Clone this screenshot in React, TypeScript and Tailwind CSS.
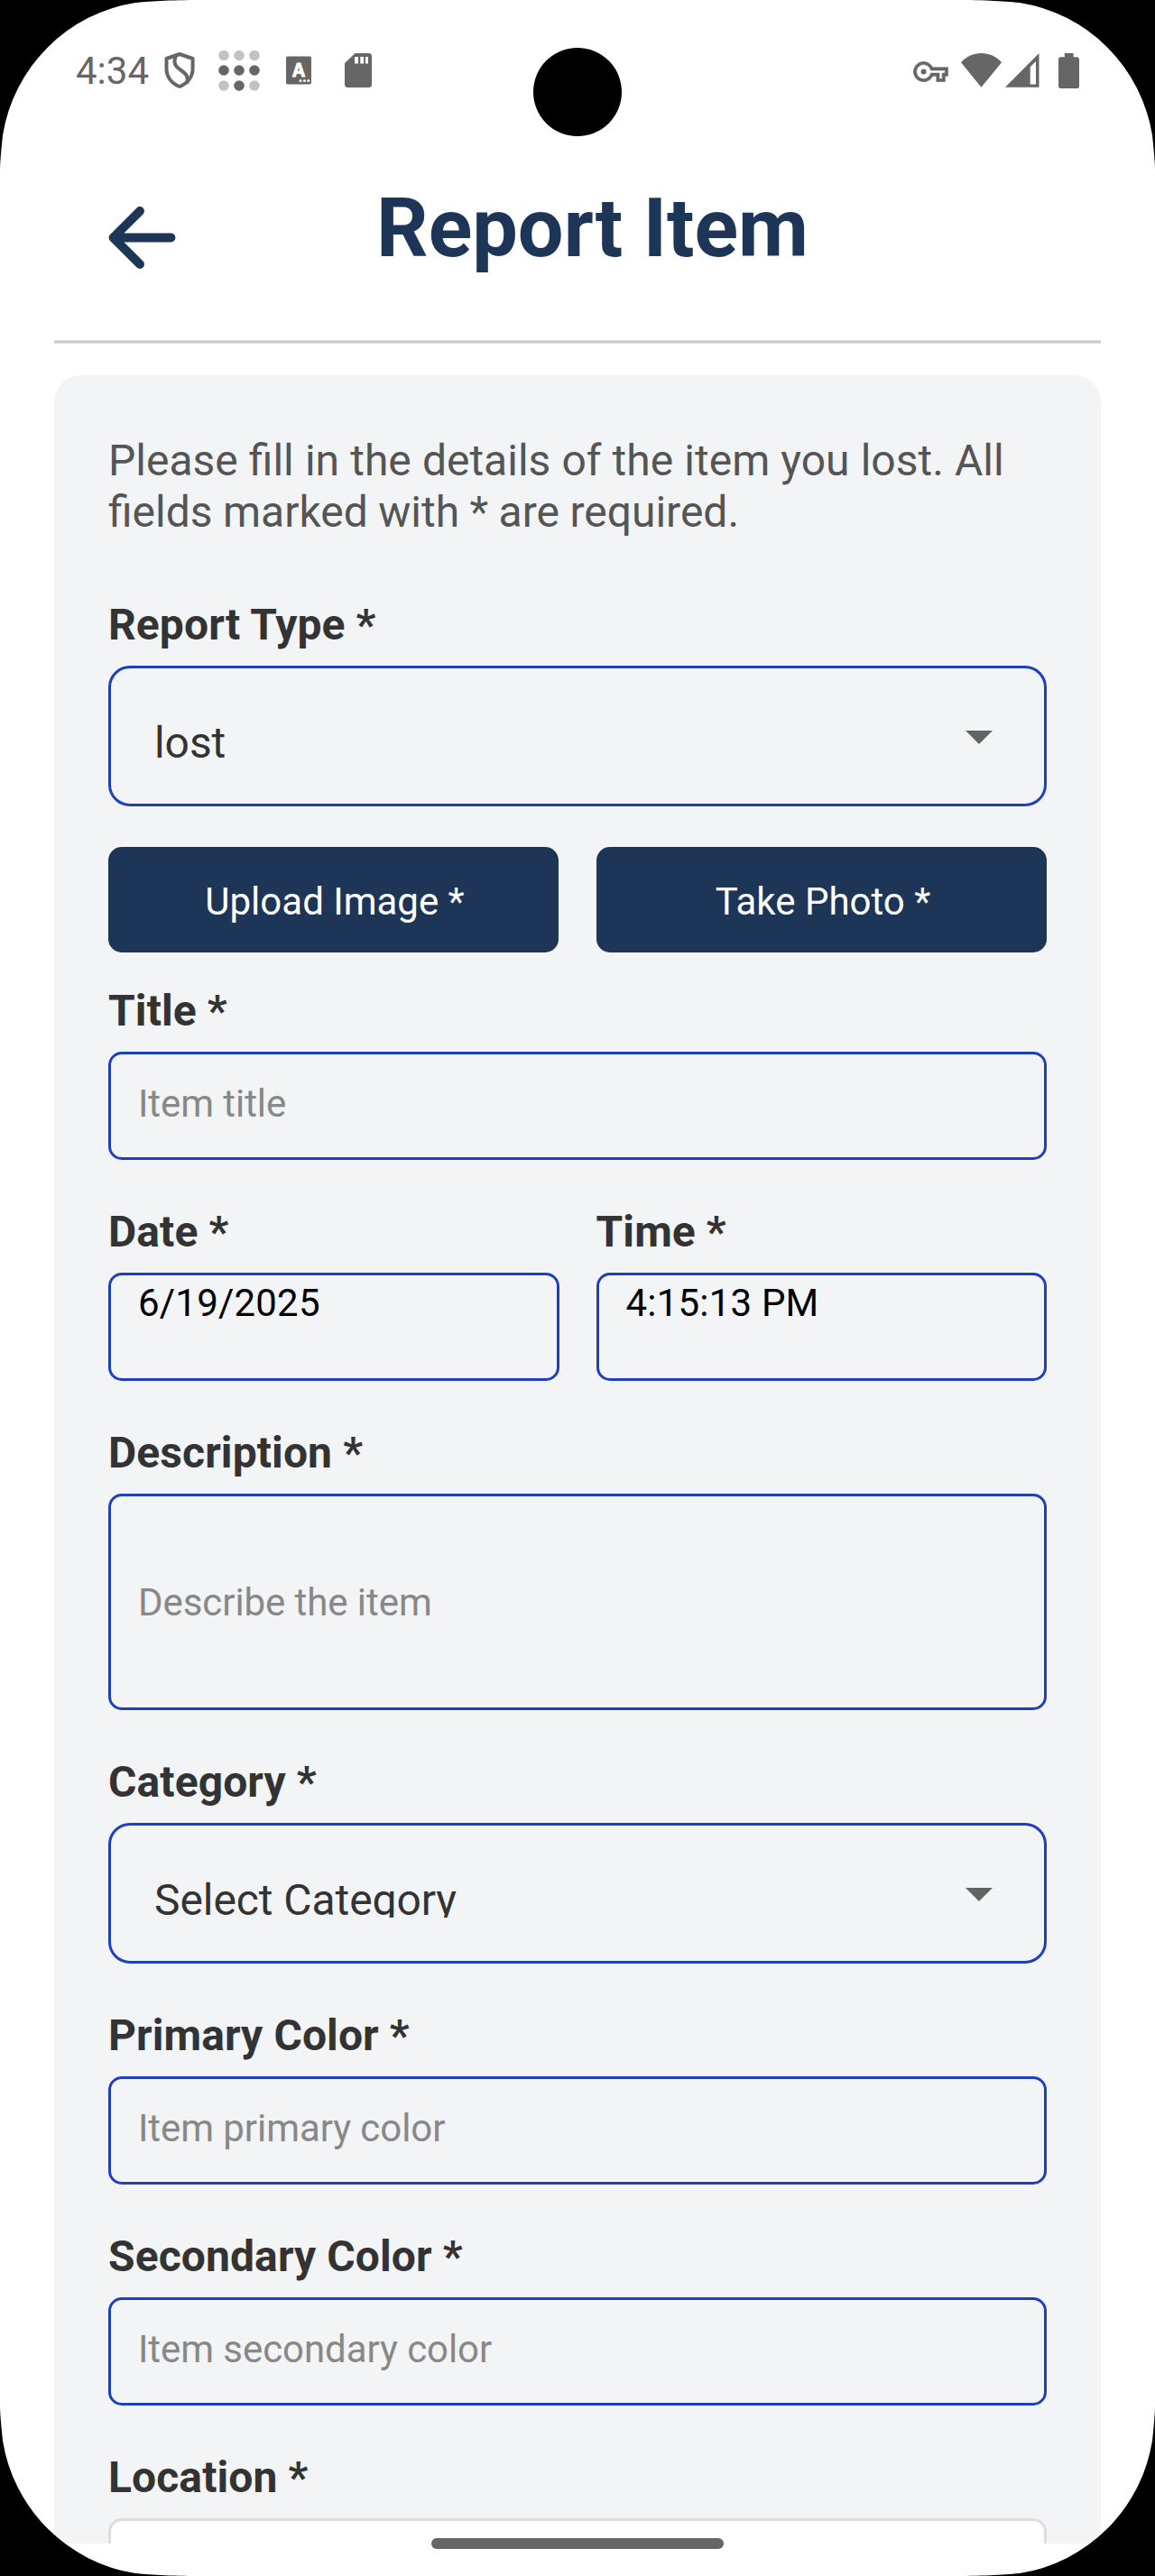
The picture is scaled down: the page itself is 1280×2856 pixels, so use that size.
import type { ReactNode } from 'react';

const INK = '#666666';

function ShieldIcon() {
  return (
    <svg className="ml-[17px] h-[42px] w-[34px]" viewBox="182 57 34 42" fill="none" stroke={INK} strokeLinejoin="round" strokeLinecap="round">
      <path d="M199 60 L213.6 65 V76 C213.6 85.500 207.500 92.500 199 96 C190.500 92.500 184.500 85.500 184.500 76 V65 Z" strokeWidth="4" />
      <path d="M195 62 C191.500 70 194.500 73.500 200 77.500 C206 81.500 209 84.500 207.500 91" strokeWidth="4" />
    </svg>
  );
}

function DotsIcon() {
  const rows = [61.5, 78, 95];
  const cols = [248, 265, 282];
  return (
    <svg className="ml-[26px] h-[46px] w-[46px]" viewBox="242 55 46 46">
      {rows.map((cy, r) =>
        cols.map((cx, c) => (
          <circle key={`${r}-${c}`} cx={cx} cy={cy} r="5.8" fill={r === 1 || (r === 2 && c === 1) ? INK : '#c2c2c2'} />
        )),
      )}
    </svg>
  );
}

function KeyboardIcon() {
  return (
    <svg className="ml-[29px] h-[32px] w-[28px]" viewBox="317 62 28 32">
      <rect x="317" y="62.500" width="28" height="31" rx="2" fill={INK} />
      <text x="331" y="85" textAnchor="middle" fontFamily="Inter, sans-serif" fontWeight="700" fontSize="19.500" fill="#fff" stroke="#fff" strokeWidth="0.800" strokeLinejoin="round">
        A
      </text>
      <circle cx="333" cy="89.600" r="1.500" fill="#fff" />
      <circle cx="337.400" cy="89.600" r="1.500" fill="#fff" />
      <circle cx="341.800" cy="89.600" r="1.500" fill="#fff" />
    </svg>
  );
}

function SdCardIcon() {
  return (
    <svg className="ml-[37px] h-[38px] w-[30px]" viewBox="382 59 30 38">
      <path d="M393.500 59 H408.500 Q412 59 412 62.500 V93.500 Q412 97 408.500 97 H385.500 Q382 97 382 93.500 V70 Z" fill={INK} />
      <path d="M393 63 h4 v7.500 h-4z M399.300 63 h3.800 v7.500 h-3.800z M405 63 h3 v7.500 h-3z" fill="#fff" />
    </svg>
  );
}

function KeyIcon() {
  return (
    <svg className="mt-[2px] h-[23px] w-[39px]" viewBox="-0.300 4.800 24.600 14.400" fill={INK}>
      <path
        fillRule="evenodd"
        stroke={INK}
        strokeWidth="0.400"
        d="M22 19h-6v-4h-2.680c-1.140 2.420-3.600 4-6.320 4-3.860 0-7-3.140-7-7s3.140-7 7-7c2.720 0 5.170 1.580 6.320 4H24v6h-2v4zm-4-2h2v-4h2v-2H11.940l-.23-.67C11.010 8.340 9.110 7 7 7c-2.760 0-5 2.240-5 5s2.240 5 5 5c2.110 0 4.010-1.340 4.710-3.330l.23-.67H18v4z"
      />
      <circle cx="7" cy="12" r="1.900" />
    </svg>
  );
}

function WifiIcon() {
  return (
    <svg className="ml-[14px] h-[38px] w-[45px]" viewBox="1065 58.500 45 38">
      <path d="M1087.500 96.300 L1065 68.700 C1071 62 1079 58.500 1087.500 58.500 C1096 58.500 1104 62 1110 68.700 Z" fill={INK} />
    </svg>
  );
}

function SignalIcon() {
  return (
    <svg className="ml-[4px] h-[38px] w-[38px]" viewBox="1114 58.500 38 38">
      <path fillRule="evenodd" d="M1114 96.300 H1151.500 V58.500 Z M1141.700 93 V73.700 L1148 67.500 V93 Z" fill={INK} />
    </svg>
  );
}

function BatteryIcon() {
  return (
    <svg className="ml-[21px] h-[39px] w-[23px]" viewBox="1173 58 23 39">
      <rect x="1179.800" y="58" width="9.800" height="6" fill={INK} />
      <rect x="1173" y="62.300" width="23" height="34.700" rx="2.800" fill={INK} />
    </svg>
  );
}

function StatusBar() {
  return (
    <div className="flex h-[156px] shrink-0 items-center justify-between pl-[84px] pr-[84px]">
      <div className="flex items-center">
        <span className="w-[81px] text-[42px] leading-[49px] text-[#666666]">4:34</span>
        <ShieldIcon />
        <DotsIcon />
        <KeyboardIcon />
        <SdCardIcon />
      </div>
      <div className="flex items-center">
        <KeyIcon />
        <WifiIcon />
        <SignalIcon />
        <BatteryIcon />
      </div>
    </div>
  );
}

function Header() {
  return (
    <header className="mx-[60px] flex h-[221px] shrink-0 items-start pl-[45px] pr-[117px]">
      <button className="mt-[55px] size-[105px] shrink-0" aria-label="Back">
        <svg className="size-full" viewBox="0 0 512 512" fill="none" stroke="#1D3557" strokeWidth="48" strokeLinecap="round" strokeLinejoin="round">
          <path d="M244 400 100 256l144-144M120 256h292" />
        </svg>
      </button>
      <h1 className="mt-[45px] flex-1 text-center text-[90px] font-bold leading-[105px] text-[#1D3557]">Report Item</h1>
    </header>
  );
}

function Field({ label, className = '', children }: { label: string; className?: string; children: ReactNode }) {
  return (
    <div className={`flex flex-col ${className}`}>
      <label className="mb-[17px] text-[48px] font-bold leading-[57px] tracking-[0.1px] text-[#333333]">{label}</label>
      {children}
    </div>
  );
}

function Placeholder({ text, tall = false }: { text: string; tall?: boolean }) {
  return (
    <div className={`flex items-center rounded-[15px] border-[3px] border-[#1E40BF] px-[30px] text-[42px] leading-[49px] tracking-[-0.07px] text-[#888888] ${tall ? 'h-[240px]' : 'h-[120px]'}`}>
      <span className={tall ? 'mt-px' : '-mt-[5px]'}>{text}</span>
    </div>
  );
}

function Value({ text }: { text: string }) {
  return (
    <div className="h-[120px] rounded-[15px] border-[3px] border-[#1E40BF] px-[30px] pt-[6px] text-[42px] leading-[49px] tracking-[0.2px] text-black">{text}</div>
  );
}

function Select({ text, clipped = false }: { text: string; clipped?: boolean }) {
  return (
    <div className="flex h-[156px] items-start justify-between rounded-[24px] border-[3px] border-[#1E40BF] pl-[48px] pr-[57px]">
      <div className={`mt-[54px] text-[48px] leading-[57px] tracking-[-0.07px] text-[#333333] ${clipped ? 'h-[48px] overflow-hidden' : ''}`}>{text}</div>
      <svg className="mt-[69px] h-[15px] w-[30px]" viewBox="0 0 30 15">
        <path d="M0 0H30L15 15Z" fill="#636363" />
      </svg>
    </div>
  );
}

function ActionButton({ text }: { text: string }) {
  return (
    <button className="h-[117px] w-[499px] rounded-[15px] bg-[#1D3557] pl-[3px] pt-[3px] text-center text-[42px] leading-[49px] text-white">
      {text}
    </button>
  );
}

/* Black mask that gives the display one rounded corner. */
function Corner({ className }: { className: string }) {
  return (
    <svg className={`absolute h-[192px] w-[232px] ${className}`} viewBox="0 0 232 192">
      <path d="M0 0H230C190 0 170 1 150 3A177 177 0 0 0 3 150C1 170 0 180 0 190Z" fill="#000" />
    </svg>
  );
}

export default function App() {
  return (
    <div className="relative flex h-[2856px] w-[1280px] flex-col overflow-hidden bg-white font-[Roboto,sans-serif]">
      <StatusBar />
      <Header />
      <div className="mx-[60px] h-[4px] shrink-0 border-y border-[#dedede] bg-[#cccccc]" />
      <main className="mx-[60px] mt-[35px] min-h-0 flex-1 overflow-hidden rounded-t-[30px] bg-[#F3F4F6] px-[60px] pt-[66px]">
        <p className="whitespace-nowrap text-[48px] leading-[57px] text-[#555555]">
          <span className="[word-spacing:0.2px]">Please fill in the details of the item you lost. All</span>
          <br />
          <span className="[word-spacing:-0.5px]">fields marked with * are required.</span>
        </p>

        <Field label="Report Type *" className="mt-[68px]">
          <Select text="lost" />
        </Field>

        <div className="mt-[45px] flex justify-between">
          <ActionButton text="Upload Image *" />
          <ActionButton text="Take Photo *" />
        </div>

        <div className="mt-[36px] flex flex-col gap-[51px]">
          <Field label="Title *">
            <Placeholder text="Item title" />
          </Field>
          <div className="grid grid-cols-2 gap-[41px]">
            <Field label="Date *">
              <Value text="6/19/2025" />
            </Field>
            <Field label="Time *">
              <Value text="4:15:13 PM" />
            </Field>
          </div>
          <Field label="Description *">
            <Placeholder text="Describe the item" tall />
          </Field>
          <Field label="Category *">
            <Select text="Select Category" clipped />
          </Field>
          <Field label="Primary Color *">
            <Placeholder text="Item primary color" />
          </Field>
          <Field label="Secondary Color *">
            <Placeholder text="Item secondary color" />
          </Field>
          <Field label="Location *">
            <div className="h-[120px] rounded-[15px] border-[3px] border-[#DDDDDD] bg-white" />
          </Field>
        </div>
      </main>
      <div className="h-[36px] shrink-0 bg-white" />

      <div className="absolute left-[591px] top-[53px] size-[98px] rounded-full bg-black" />
      <div className="absolute left-[478px] top-[2814px] h-[12px] w-[324px] rounded-full bg-[#666666]" />
      <Corner className="left-0 top-0" />
      <Corner className="right-0 top-0 -scale-x-100" />
      <Corner className="bottom-0 left-0 -scale-y-100" />
      <Corner className="bottom-0 right-0 -scale-100" />
    </div>
  );
}
